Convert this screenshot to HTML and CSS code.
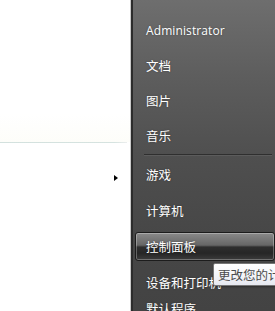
FILE: index.html
```html
<!DOCTYPE html>
<html lang="zh-CN">
<head>
<meta charset="utf-8">
<title>开始菜单</title>
<link rel="stylesheet" href="styles.css">
</head>
<body>
<div class="screen">
  <div class="left">
    <div class="left-top"></div>
    <div class="rule"></div>
    <div class="arrow-row"><span class="arrow"></span></div>
  </div>
  <div class="panel">
    <ul class="group group-top">
      <li class="item latin">Administrator</li>
      <li class="item">文档</li>
      <li class="item">图片</li>
      <li class="item">音乐</li>
    </ul>
    <div class="sep"></div>
    <ul class="group group-bottom">
      <li class="item">游戏</li>
      <li class="item">计算机</li>
      <li class="item active"><span class="hl">控制面板</span></li>
      <li class="item">设备和打印机</li>
      <li class="item item-last">默认程序</li>
    </ul>
    <div class="tooltip">更改您的计算机的设置并自定义其功能。</div>
  </div>
</div>
</body>
</html>
```

FILE: styles.css
```css
html, body {
  margin: 0;
  padding: 0;
  width: 275px;
  height: 311px;
  overflow: hidden;
  background: #ffffff;
}

.screen {
  display: flex;
  width: 275px;
  height: 311px;
  overflow: hidden;
  font-family: "Noto Sans CJK SC", "Noto Sans", sans-serif;
}

.left {
  width: 130px;
  flex: none;
  display: flex;
  flex-direction: column;
  background: #ffffff;
}

.left-top {
  height: 142px;
  background: linear-gradient(to bottom, #ffffff 0%, #ffffff 80%, #fdfdf9 100%);
}

.rule {
  height: 1px;
  margin-right: 3px;
  background: linear-gradient(to right, #d3e1de 0%, #d6e3e0 90%, #eceeee 100%);
}

.arrow-row {
  display: flex;
  justify-content: flex-end;
  padding-top: 32px;
  padding-right: 12px;
}

.arrow {
  width: 0;
  height: 0;
  border-top: 3.5px solid transparent;
  border-bottom: 3.5px solid transparent;
  border-left: 4px solid #000000;
}

.panel {
  position: relative;
  flex: 1;
  border-left: 1px solid #c9c9c9;
  box-shadow: inset 2px 0 0 #2c2c2c;
  background: linear-gradient(to bottom, #6e6e6e 0%, #5d5d5d 25%, #4f4f4f 50%, #474747 75%, #434343 100%);
  padding-left: 15px;
}

.group {
  list-style: none;
  margin: 0;
  padding: 0;
}

.group-top {
  padding-top: 13px;
}

.group-top .item {
  height: 35px;
}

.group-bottom .item {
  height: 36px;
}

.group-bottom .item-last {
  height: 17px;
}

.item {
  display: flex;
  align-items: center;
  color: #ffffff;
  font-size: 12.5px;
  text-shadow: 0 0 2px rgba(0, 0, 0, 0.35);
  white-space: nowrap;
}

.latin {
  font-family: "Open Sans", "Noto Sans", sans-serif;
  font-size: 12px;
  letter-spacing: 0.1px;
}

.sep {
  height: 1px;
  margin: 1px 3px 0 -2px;
  background: #2f2f2f;
  border-bottom: 1px solid #5c5c5c;
}

.hl {
  display: flex;
  align-items: center;
  box-sizing: border-box;
  height: 29px;
  width: calc(100% + 12px);
  margin-left: -11px;
  margin-top: 1px;
  padding-left: 10px;
  border: 1px solid #1c1c1c;
  border-radius: 3px;
  box-shadow: inset 0 0 0 1px rgba(255, 255, 255, 0.28);
  background: linear-gradient(to bottom, #8a8a8a 0%, #666666 45%, #2e2e2e 52%, #262626 75%, #3c3c3c 100%);
}

.tooltip {
  position: absolute;
  left: 82px;
  top: 263px;
  height: 23px;
  box-sizing: border-box;
  padding: 0 6px 0 4px;
  display: flex;
  align-items: center;
  white-space: nowrap;
  font-size: 12.5px;
  color: #4c4c4c;
  background: linear-gradient(to bottom, #ffffff 0%, #f2f3f7 60%, #e6e8f0 100%);
  border: 1px solid #767676;
  border-radius: 2px;
  box-shadow: 1px 1px 2px rgba(0, 0, 0, 0.35);
}
```
